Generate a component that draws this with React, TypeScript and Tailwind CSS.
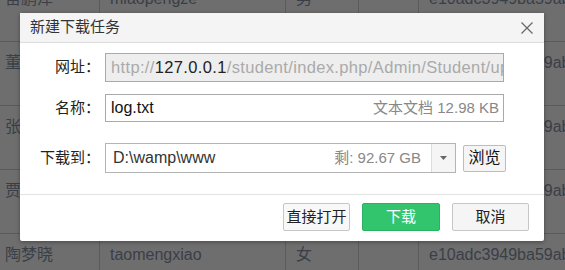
import React from 'react';

type Row = {
  name: string;
  account: string;
  sex: string;
  note: string;
  pwd: string;
};

const rows: Row[] = [
  { name: '苗鹏泽', account: 'miaopengze', sex: '男', note: '', pwd: 'e10adc3949ba59abbe56e057f20f883e' },
  { name: '董晓敏', account: 'dongxiaomin', sex: '女', note: '', pwd: 'e10adc3949ba59abbe56e057f20f883e' },
  { name: '张志强', account: 'zhangzhiqiang', sex: '男', note: '', pwd: 'e10adc3949ba59abbe56e057f20f883e' },
  { name: '贾文静', account: 'jiawenjing', sex: '女', note: '', pwd: 'e10adc3949ba59abbe56e057f20f883e' },
  { name: '陶梦晓', account: 'taomengxiao', sex: '女', note: '', pwd: 'e10adc3949ba59abbe56e057f20f883e' },
];

const font = { fontFamily: '"Liberation Sans", "Noto Sans CJK SC", sans-serif' };

export default function App() {
  return (
    <div className="relative h-[270px] w-[565px] overflow-hidden bg-white" style={font}>
      {/* table behind the modal */}
      <div className="-mt-[22px]">
        {rows.map((row, i) => (
          <div
            key={i}
            className="grid h-[64px] grid-cols-[100px_186px_73px_60px_1fr] border-b border-[#d4d4d4] text-[16px] leading-[20px] text-[#8893a6]"
          >
            <div className="border-r border-[#d4d4d4] pl-[5px] pt-[11px] whitespace-nowrap">{row.name}</div>
            <div className="border-r border-[#d4d4d4] pl-[10px] pt-[11px] whitespace-nowrap">{row.account}</div>
            <div className="border-r border-[#d4d4d4] pl-[10px] pt-[11px]">{row.sex}</div>
            <div className="border-r border-[#d4d4d4] pl-[10px] pt-[11px]">{row.note}</div>
            <div className="overflow-hidden pl-[10px] pt-[11px] whitespace-nowrap">{row.pwd}</div>
          </div>
        ))}
      </div>

      {/* overlay */}
      <div className="absolute inset-0 bg-black/[0.57]" />

      {/* dialog */}
      <div className="absolute left-[20px] top-[13px] flex h-[228px] w-[524px] flex-col rounded-[2px] bg-white shadow-[0_1px_4px_rgba(0,0,0,0.35)]">
        <div className="flex h-[30px] items-center justify-between border-b border-[#dcdcdc] bg-[#f4f4f4] pl-[10px] pr-[11px]">
          <span className="text-[15px] text-[#333]">新建下载任务</span>
          <svg width="12" height="12" viewBox="0 0 12 12" className="mt-[1px]">
            <path d="M0.5 0.5L11.5 11.5M11.5 0.5L0.5 11.5" stroke="#666" strokeWidth="1.2" />
          </svg>
        </div>

        <div className="flex-1 pt-[10px]">
          <div className="flex items-center">
            <div className="w-[85px] pr-[5px] text-right text-[15px] text-[#222]">网址：</div>
            <div className="flex h-[29px] w-[399px] items-center overflow-hidden whitespace-nowrap border border-[#a9a9a9] bg-[#eeeeee] pl-[5px] text-[16.5px] tracking-[0.35px] text-[#aaa]">
              http://<span className="text-[#222]">127.0.0.1</span>/student/index.php/Admin/Student/update/id/12
            </div>
          </div>

          <div className="mt-[12px] flex items-center">
            <div className="w-[85px] pr-[5px] text-right text-[15px] text-[#222]">名称：</div>
            <div className="flex h-[28px] w-[399px] items-center justify-between border border-[#a9a9a9] bg-white pl-[5px] pr-[4px]">
              <span className="text-[16px] text-[#111]">log.txt</span>
              <span className="text-[15px] text-[#888]">文本文档 12.98 KB</span>
            </div>
          </div>

          <div className="mt-[21px] flex items-center">
            <div className="w-[85px] pr-[5px] text-right text-[15px] text-[#222]">下载到：</div>
            <div className="flex h-[30px] w-[351px] items-stretch border border-[#b4b4b4] bg-white">
              <div className="flex flex-1 items-center justify-between pl-[7px] pr-[10px]">
                <span className="text-[16px] text-[#333]">D:\wamp\www</span>
                <span className="text-[15px] text-[#888]">剩: 92.67 GB</span>
              </div>
              <div className="flex w-[24px] items-center justify-center border-l border-[#dcdcdc] bg-[#f5f5f5]">
                <svg width="7" height="4" viewBox="0 0 7 4">
                  <path d="M0 0H7L3.5 4Z" fill="#666" />
                </svg>
              </div>
            </div>
            <button className="ml-[7px] h-[27px] w-[43px] rounded-[2px] border border-[#bdbdbd] bg-[#f5f5f5] text-[16px] text-[#111]">
              浏览
            </button>
          </div>
        </div>

        <div className="flex items-center justify-end gap-[12px] border-t border-[#e3e3e3] pb-[10px] pl-[10px] pr-[15px] pt-[8px]">
          <button className="h-[28px] w-[67px] rounded-[2px] border border-[#c6c6c6] bg-[#f8f8f8] text-[15px] text-[#222]">
            直接打开
          </button>
          <button className="h-[28px] w-[78px] rounded-[2px] border border-[#28b262] bg-[#33c46e] text-[15px] text-white">
            下载
          </button>
          <button className="h-[28px] w-[77px] rounded-[2px] border border-[#c6c6c6] bg-[#f5f5f5] text-[15px] text-[#222]">
            取消
          </button>
        </div>
      </div>
    </div>
  );
}
